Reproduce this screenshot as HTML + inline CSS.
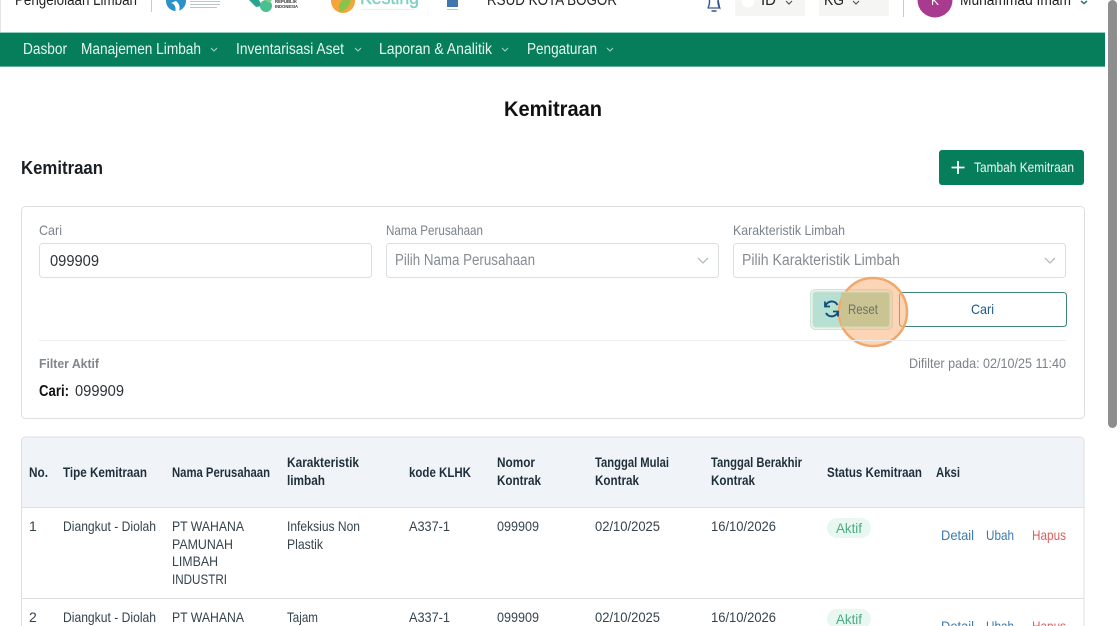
<!DOCTYPE html>
<html lang="id"><head><meta charset="utf-8"><title>Kemitraan</title>
<style>
html,body{margin:0;padding:0;width:1120px;height:626px;overflow:hidden;background:#fff}
svg{display:block;font-family:"Liberation Sans",sans-serif}
text{font-size:14px;fill:#35434d}
.b{font-weight:700;fill:#1f2f3a;font-size:13.5px}
.n{fill:#e8f6f1;font-size:15.5px}
.l{fill:#7b838a;font-size:14px}
.p{fill:#858c92;font-size:15.5px}
.bd{fill:#fff;stroke:#dcdfe2}
.ch{fill:none;stroke:#b5bcc0;stroke-width:1.3}
.nc{fill:none;stroke:#a9d5c6;stroke-width:1}
</style></head><body>
<svg width="1120" height="626" viewBox="0 0 1120 626" xmlns="http://www.w3.org/2000/svg">
<rect width="1120" height="626" fill="#fff"/>
<rect x="0" y="0" width="1" height="32" fill="#e4e4e4"/>
<text x="15" y="5" textLength="122" lengthAdjust="spacingAndGlyphs" style="font-size:15.5px;fill:#222">Pengelolaan Limbah</text>
<rect x="151" y="0" width="1" height="12" fill="#c9cbcc"/>
<circle cx="176" cy="1" r="10" fill="#2a91c9"/><path d="M171 3q5 1 4.500 8h3.500q2-6-3-10z" fill="#fff"/>
<rect x="190" y="1" width="30" height="1" fill="#b9c6cd"/><rect x="190" y="4" width="30" height="1" fill="#b9c6cd"/><rect x="190" y="7" width="27" height="1" fill="#b9c6cd"/>
<path d="M249 0h10l3 6-6 1z" fill="#2aa58c"/><circle cx="266" cy="6" r="6" fill="#4abf90"/><path d="M265 0h7l-3 3z" fill="#7ccf8a"/>
<text x="275" y="3" textLength="22" lengthAdjust="spacingAndGlyphs" style="font-size:4.500px;font-weight:700;fill:#333">REPUBLIK</text>
<text x="275" y="8" textLength="23" lengthAdjust="spacingAndGlyphs" style="font-size:4.500px;font-weight:700;fill:#333">INDONESIA</text>
<circle cx="343" cy="1" r="12" fill="#f4a63a"/><path d="M340 12q-4-9 6-14l5 1q-1 10-11 13z" fill="#8bc34a"/>
<text x="360" y="4" textLength="59" lengthAdjust="spacingAndGlyphs" style="font-size:19px;fill:#7ed0c4;stroke:#7ed0c4;stroke-width:.4">Kesting</text>
<rect x="361" y="9" width="53" height="1" fill="#e3f2ef"/>
<rect x="447" y="0" width="11" height="7" fill="#3f76ae"/><rect x="447" y="9" width="11" height="1" fill="#b4c8da"/>
<text x="487" y="5" textLength="130" lengthAdjust="spacingAndGlyphs" style="font-size:15.500px;fill:#222">RSUD KOTA BOGOR</text>
<path d="M708 7.500q1-1 1.500-5V0M718 0v2.500q.5 4 1.500 5zM711.500 11h5" fill="none" stroke="#33508f" stroke-width="1.400"/>
<path d="M707.500 8h13" stroke="#33508f" stroke-width="1.200"/>
<rect x="735" y="0" width="70" height="16" fill="#f5f5f4"/>
<circle cx="748" cy="1" r="6.500" fill="#fff"/>
<text x="761" y="5" textLength="15" lengthAdjust="spacingAndGlyphs" style="font-size:15.500px;fill:#222">ID</text>
<path d="M786 1l3 3 3-3" fill="none" stroke="#555" stroke-width="1.200"/>
<rect x="819" y="0" width="70" height="16" fill="#f5f5f4"/>
<text x="824" y="5" textLength="20" lengthAdjust="spacingAndGlyphs" style="font-size:15.500px;fill:#222">KG</text>
<path d="M853 1l3 3 3-3" fill="none" stroke="#555" stroke-width="1.200"/>
<rect x="903" y="0" width="1" height="17" fill="#c9cbcc"/>
<circle cx="935" cy="0" r="17.500" fill="#a83a8f"/>
<text x="931" y="5" style="font-size:12px;fill:#fff">K</text>
<text x="960" y="5" textLength="111" lengthAdjust="spacingAndGlyphs" style="font-size:15.500px;fill:#222">Muhammad Imam</text>
<path d="M1081 1l3 2.500 3-2.500" fill="none" stroke="#2d7f75" stroke-width="1.500"/>

<rect x="0" y="32" width="1105" height="35" fill="#077e5b"/>
<rect x="0" y="32" width="1105" height="1" fill="#8fd0bc"/>
<rect x="0" y="66" width="1105" height="1" fill="#5fae97"/>
<text class="n" x="23" y="54" textLength="44" lengthAdjust="spacingAndGlyphs">Dasbor</text>
<text class="n" x="81" y="54" textLength="120" lengthAdjust="spacingAndGlyphs">Manajemen Limbah</text>
<path class="nc" d="M211 48l3 3 3-3"/>
<text class="n" x="236" y="54" textLength="108" lengthAdjust="spacingAndGlyphs">Inventarisasi Aset</text>
<path class="nc" d="M355 48l3 3 3-3"/>
<text class="n" x="379" y="54" textLength="113" lengthAdjust="spacingAndGlyphs">Laporan &amp; Analitik</text>
<path class="nc" d="M502 48l3 3 3-3"/>
<text class="n" x="527" y="54" textLength="70" lengthAdjust="spacingAndGlyphs">Pengaturan</text>
<path class="nc" d="M607 48l3 3 3-3"/>

<rect x="1108" y="0" width="9" height="428" rx="4.500" fill="#8e8e8e"/>

<text x="504" y="116" textLength="98" lengthAdjust="spacingAndGlyphs" style="font-size:21.500px;font-weight:700;fill:#111">Kemitraan</text>
<text x="21" y="174" textLength="82" lengthAdjust="spacingAndGlyphs" style="font-size:18.500px;font-weight:700;fill:#1a1f24">Kemitraan</text>
<rect x="939" y="150" width="145" height="35" rx="3" fill="#077e5b"/>
<path d="M958 161v13M951.500 167.500h13" stroke="#fff" stroke-width="1.800"/>
<text x="974" y="172" textLength="100" lengthAdjust="spacingAndGlyphs" style="font-size:14px;fill:#eef8f4">Tambah Kemitraan</text>

<rect class="bd" x="21.500" y="206.500" width="1063" height="212" rx="4"/>
<text class="l" x="39" y="235" textLength="23" lengthAdjust="spacingAndGlyphs">Cari</text>
<rect class="bd" x="39.500" y="243.500" width="332" height="34" rx="3"/>
<text x="50" y="266" textLength="49" lengthAdjust="spacingAndGlyphs" style="font-size:15.500px;fill:#2b3238">099909</text>
<text class="l" x="386" y="235" textLength="97" lengthAdjust="spacingAndGlyphs">Nama Perusahaan</text>
<rect class="bd" x="386.500" y="243.500" width="332" height="34" rx="3"/>
<text class="p" x="395" y="265" textLength="140" lengthAdjust="spacingAndGlyphs">Pilih Nama Perusahaan</text>
<path class="ch" d="M698 258l5 5 5-5"/>
<text class="l" x="733" y="235" textLength="112" lengthAdjust="spacingAndGlyphs">Karakteristik Limbah</text>
<rect class="bd" x="733.500" y="243.500" width="332" height="34" rx="3"/>
<text class="p" x="742" y="265" textLength="158" lengthAdjust="spacingAndGlyphs">Pilih Karakteristik Limbah</text>
<path class="ch" d="M1045 258l5 5 5-5"/>

<rect x="810.500" y="289.500" width="82" height="40" rx="5" fill="#e6f5f0" stroke="#c7e6dc"/>
<rect x="813" y="292" width="77" height="35" rx="3" fill="#b5e0d3"/>
<rect x="899.500" y="292.500" width="167" height="34" rx="3" fill="#fff" stroke="#3d8578"/>
<text x="971" y="314" textLength="23" lengthAdjust="spacingAndGlyphs" style="font-size:14px;fill:#1e5a86">Cari</text>
<circle cx="873" cy="312" r="34" fill="#f7b27a" fill-opacity=".55" stroke="#f1a86c" stroke-width="2.500"/>
<rect x="841" y="292" width="49" height="35" fill="#c9c492"/>
<rect x="813" y="292" width="77" height="35" rx="3" fill="none" stroke="#d8dcc0" stroke-width="1"/>
<path d="M825.500 306a6.500 6.500 0 0 1 12-1M838 311.500a6.500 6.500 0 0 1-12 1.500" fill="none" stroke="#124f78" stroke-width="2"/>
<path d="M825 301.500v5h5M838 316.500v-5h-5" fill="none" stroke="#124f78" stroke-width="1.800"/>
<text x="848" y="314" textLength="30" lengthAdjust="spacingAndGlyphs" style="font-size:14px;fill:#6c7268">Reset</text>

<rect x="39" y="340" width="1027" height="1" fill="#eceeef"/>
<text x="39" y="368" textLength="60" lengthAdjust="spacingAndGlyphs" style="font-size:13px;font-weight:700;fill:#7f878d">Filter Aktif</text>
<text x="909" y="368" textLength="157" lengthAdjust="spacingAndGlyphs" style="font-size:14px;fill:#7b838a">Difilter pada: 02/10/25 11:40</text>
<text x="39" y="396" textLength="30" lengthAdjust="spacingAndGlyphs" style="font-size:15.500px;font-weight:700;fill:#111">Cari:</text>
<text x="75" y="396" textLength="49" lengthAdjust="spacingAndGlyphs" style="font-size:15.500px;fill:#2b3238">099909</text>

<path d="M21.500 626V441a4 4 0 0 1 4-4H1080a4 4 0 0 1 4 4V626" fill="#fff" stroke="#dcdfe2"/>
<path d="M22 507V441a3.500 3.500 0 0 1 3.500-3.500H1080a3.500 3.500 0 0 1 3.500 3.500V507z" fill="#f0f4f8"/>
<rect x="22" y="507" width="1062" height="1" fill="#dcdfe2"/>
<rect x="22" y="598" width="1062" height="1" fill="#dcdfe2"/>

<text class="b" x="29" y="477" textLength="19" lengthAdjust="spacingAndGlyphs">No.</text>
<text class="b" x="63" y="477" textLength="84" lengthAdjust="spacingAndGlyphs">Tipe Kemitraan</text>
<text class="b" x="172" y="477" textLength="98" lengthAdjust="spacingAndGlyphs">Nama Perusahaan</text>
<text class="b" x="287" y="467" textLength="72" lengthAdjust="spacingAndGlyphs">Karakteristik</text>
<text class="b" x="287" y="485" textLength="38" lengthAdjust="spacingAndGlyphs">limbah</text>
<text class="b" x="409" y="477" textLength="62" lengthAdjust="spacingAndGlyphs">kode KLHK</text>
<text class="b" x="497" y="467" textLength="38" lengthAdjust="spacingAndGlyphs">Nomor</text>
<text class="b" x="497" y="485" textLength="44" lengthAdjust="spacingAndGlyphs">Kontrak</text>
<text class="b" x="595" y="467" textLength="74" lengthAdjust="spacingAndGlyphs">Tanggal Mulai</text>
<text class="b" x="595" y="485" textLength="44" lengthAdjust="spacingAndGlyphs">Kontrak</text>
<text class="b" x="711" y="467" textLength="91" lengthAdjust="spacingAndGlyphs">Tanggal Berakhir</text>
<text class="b" x="711" y="485" textLength="44" lengthAdjust="spacingAndGlyphs">Kontrak</text>
<text class="b" x="827" y="477" textLength="95" lengthAdjust="spacingAndGlyphs">Status Kemitraan</text>
<text class="b" x="936" y="477" textLength="24" lengthAdjust="spacingAndGlyphs">Aksi</text>

<text x="29" y="531">1</text>
<text x="63" y="531" textLength="93" lengthAdjust="spacingAndGlyphs">Diangkut - Diolah</text>
<text x="172" y="531" textLength="72" lengthAdjust="spacingAndGlyphs">PT WAHANA</text>
<text x="172" y="549" textLength="61" lengthAdjust="spacingAndGlyphs">PAMUNAH</text>
<text x="172" y="566" textLength="46" lengthAdjust="spacingAndGlyphs">LIMBAH</text>
<text x="172" y="584" textLength="55" lengthAdjust="spacingAndGlyphs">INDUSTRI</text>
<text x="287" y="531" textLength="73" lengthAdjust="spacingAndGlyphs">Infeksius Non</text>
<text x="287" y="549" textLength="36" lengthAdjust="spacingAndGlyphs">Plastik</text>
<text x="409" y="531" textLength="41" lengthAdjust="spacingAndGlyphs">A337-1</text>
<text x="497" y="531" textLength="42" lengthAdjust="spacingAndGlyphs">099909</text>
<text x="595" y="531" textLength="65" lengthAdjust="spacingAndGlyphs">02/10/2025</text>
<text x="711" y="531" textLength="65" lengthAdjust="spacingAndGlyphs">16/10/2026</text>
<rect x="827" y="518" width="44" height="20" rx="10" fill="#e8f8f1"/>
<text x="836" y="533" textLength="26" lengthAdjust="spacingAndGlyphs" style="fill:#4aab85">Aktif</text>
<text x="941" y="540" textLength="33" lengthAdjust="spacingAndGlyphs" style="fill:#3f79ad">Detail</text>
<text x="986" y="540" textLength="28" lengthAdjust="spacingAndGlyphs" style="fill:#3f79ad">Ubah</text>
<text x="1032" y="540" textLength="34" lengthAdjust="spacingAndGlyphs" style="fill:#d9605f">Hapus</text>

<text x="29" y="622">2</text>
<text x="63" y="622" textLength="93" lengthAdjust="spacingAndGlyphs">Diangkut - Diolah</text>
<text x="172" y="622" textLength="72" lengthAdjust="spacingAndGlyphs">PT WAHANA</text>
<text x="287" y="622" textLength="31" lengthAdjust="spacingAndGlyphs">Tajam</text>
<text x="409" y="622" textLength="41" lengthAdjust="spacingAndGlyphs">A337-1</text>
<text x="497" y="622" textLength="42" lengthAdjust="spacingAndGlyphs">099909</text>
<text x="595" y="622" textLength="65" lengthAdjust="spacingAndGlyphs">02/10/2025</text>
<text x="711" y="622" textLength="65" lengthAdjust="spacingAndGlyphs">16/10/2026</text>
<rect x="827" y="609" width="44" height="20" rx="10" fill="#e8f8f1"/>
<text x="836" y="624" textLength="26" lengthAdjust="spacingAndGlyphs" style="fill:#4aab85">Aktif</text>
<text x="941" y="631" textLength="33" lengthAdjust="spacingAndGlyphs" style="fill:#3f79ad">Detail</text>
<text x="986" y="631" textLength="28" lengthAdjust="spacingAndGlyphs" style="fill:#3f79ad">Ubah</text>
<text x="1032" y="631" textLength="34" lengthAdjust="spacingAndGlyphs" style="fill:#d9605f">Hapus</text>
</svg>
</body></html>
